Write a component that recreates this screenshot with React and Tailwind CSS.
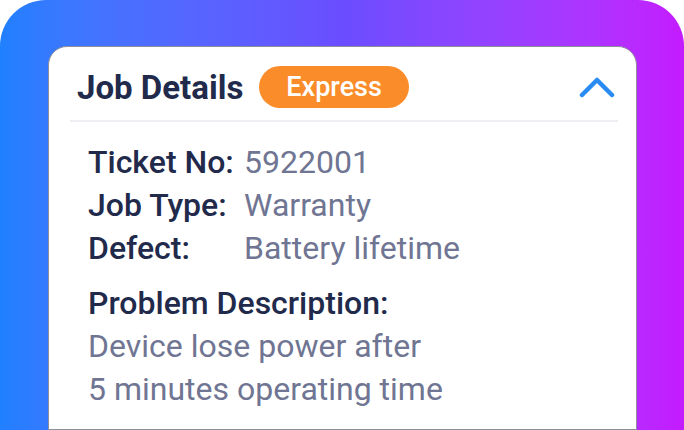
import React from 'react';

const rows = [
  { label: 'Ticket No:', value: '5922001' },
  { label: 'Job Type:', value: 'Warranty' },
  { label: 'Defect:', value: 'Battery lifetime' },
];

function ChevronUp() {
  return (
    <svg width="36" height="22" viewBox="0 0 36 22" fill="none">
      <path d="M3 19L18 4L33 19" stroke="#2a8cf2" strokeWidth="4.5" strokeLinecap="round" strokeLinejoin="round" />
    </svg>
  );
}

export default function App() {
  return (
    <div className="w-[684px] h-[430px] bg-white overflow-hidden" style={{ fontFamily: 'Roboto, "Noto Sans", sans-serif' }}>
      <div className="h-full rounded-t-[46px] bg-gradient-to-r from-[#1f80ff] via-[#6a4dff] to-[#c41aff] pl-[48px] pr-[47px] pt-[46px]">
        <div className="h-full bg-white rounded-t-[19px] border border-[#8f8f9a]">
          {/* header */}
          <div className="flex items-center justify-between pl-[28px] pr-[21px] pt-[19px] pb-[12px]">
            <div className="flex items-center gap-[16px]">
              <h2 className="text-[33px] font-bold text-[#222a4c] leading-none">Job Details</h2>
              <span className="h-[42px] px-[27px] rounded-full bg-[#fa8c2a] text-white text-[27px] font-medium flex items-center">
                Express
              </span>
            </div>
            <ChevronUp />
          </div>
          <div className="ml-[21px] mr-[18px] h-[2px] bg-[#efeff3]" />

          {/* details */}
          <div className="pl-[39px] pt-[19px]">
            <div className="grid grid-cols-[156px_1fr] text-[32px] leading-[43px]">
              {rows.map((r) => (
                <React.Fragment key={r.label}>
                  <span className="font-medium text-[#222a4c]">{r.label}</span>
                  <span className="text-[#6f7592]">{r.value}</span>
                </React.Fragment>
              ))}
            </div>
            <div className="mt-[12px] text-[32px] leading-[43px]">
              <div className="font-medium text-[#222a4c]">Problem Description:</div>
              <div className="text-[#6f7592]">Device lose power after</div>
              <div className="text-[#6f7592]">5 minutes operating time</div>
            </div>
          </div>
        </div>
      </div>
    </div>
  );
}
